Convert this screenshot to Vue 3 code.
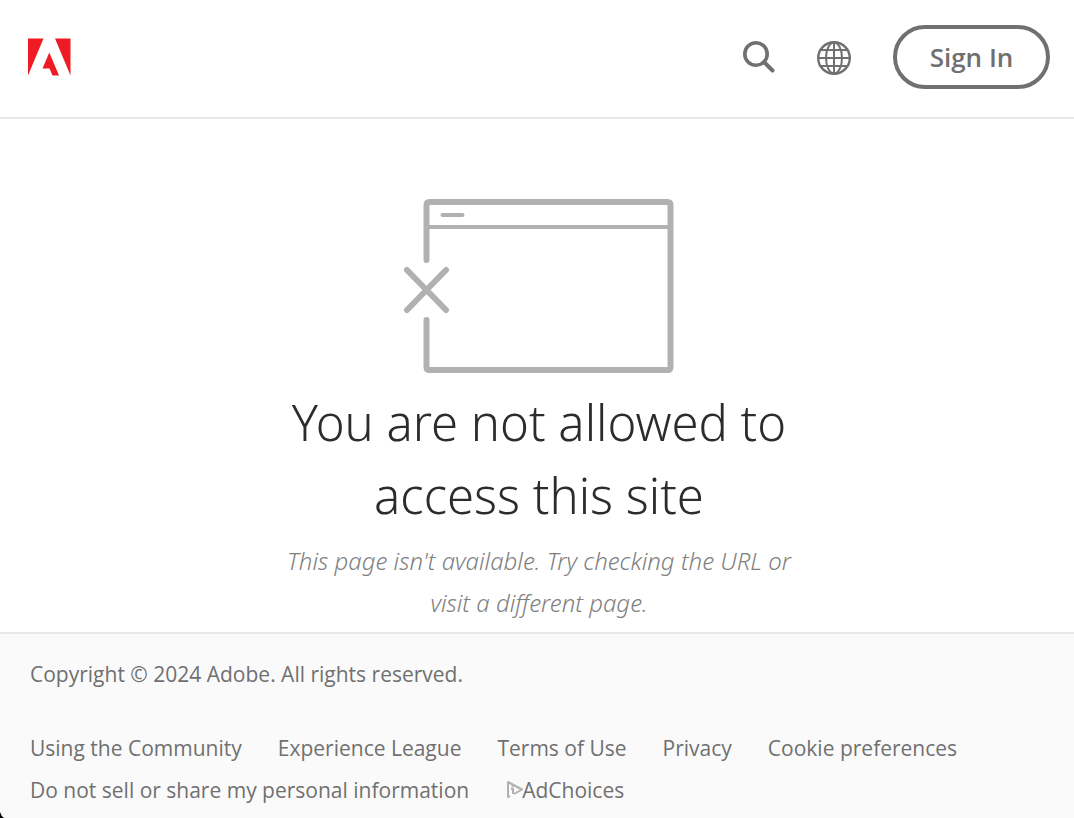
<script setup>
import { ref } from "vue"

const copyright = "Copyright © 2024 Adobe. All rights reserved."

const links = ref([
  { text: "Using the Community" },
  { text: "Experience League" },
  { text: "Terms of Use" },
  { text: "Privacy" },
  { text: "Cookie preferences" },
  { text: "Do not sell or share my personal information" },
  { text: "AdChoices", adIcon: true },
])
</script>

<template>
  <div class="page">
    <header class="header">
      <a href="#" class="logo" aria-label="Adobe">
        <svg width="43" height="38" viewBox="0 0 43 38">
          <path fill="#ed1c24" d="M0 .5H15.500L0 37.500ZM27 .5H42.500V37.500ZM21.300 14.500L31 37.500H24.500L21.500 30.500H14.500Z" />
        </svg>
      </a>
      <div class="actions">
        <button type="button" class="icon-btn" aria-label="Search">
          <svg width="34" height="36" viewBox="0 0 34 36" fill="none" stroke="#707070">
            <circle cx="15" cy="15" r="11.200" stroke-width="3.600" />
            <path d="M23 23L31.500 31.500" stroke-width="4" stroke-linecap="round" />
          </svg>
        </button>
        <button type="button" class="icon-btn" aria-label="Language">
          <svg width="34" height="36" viewBox="0 0 34 36" fill="none" stroke="#707070" stroke-width="2">
            <circle cx="17" cy="19" r="15.800" stroke-width="2.400" />
            <ellipse cx="17" cy="19" rx="8" ry="15.500" />
            <path d="M17 3V35M1 19H33M3 11H31M3 27H31" />
          </svg>
        </button>
        <button type="button" class="sign-in">Sign In</button>
      </div>
    </header>

    <main class="main">
      <svg class="picture" width="272" height="176" viewBox="0 0 272 176" fill="none" stroke="#b1b1b1" stroke-linecap="round">
        <path d="M23.500 62V7Q23.500 4 26.500 4H264.500Q267.500 4 267.500 7V169Q267.500 172 264.500 172H26.500Q23.500 172 23.500 169V122" stroke-width="6" />
        <path d="M24 29H268" stroke-width="4" />
        <path d="M39.500 17H59.500" stroke-width="4" />
        <path d="M4 72L43 112M43 72L4 112" stroke-width="6" />
      </svg>
      <h1>You are not allowed to access this site</h1>
      <p>This page isn't available. Try checking the URL or visit a different page.</p>
    </main>

    <footer class="footer">
      <div class="copyright">{{ copyright }}</div>
      <nav class="links">
        <a v-for="item in links" :key="item.text" href="#">
          <svg v-if="item.adIcon" class="ad-icon" width="18" height="18" viewBox="0 0 18 18" fill="none" stroke="#b1b1b1" stroke-width="2">
            <path d="M5 16L3 17V2L17 9.500L9 14" stroke-linejoin="round" />
            <path d="M7.500 5.500V7.500M6 9H8V14" />
          </svg>{{ item.text }}
        </a>
      </nav>
    </footer>

    <!-- rounded corner of the window -->
    <svg class="corner" width="4" height="6" viewBox="0 0 4 6">
      <path d="M0 0Q1 4 4 6H0Z" fill="#000" />
    </svg>
  </div>
</template>

<style>
body {
  margin: 0;
  background: #fff;
}
</style>

<style scoped>
.page {
  position: relative;
  display: flex;
  flex-direction: column;
  min-height: 100vh;
  font-family: "Open Sans", "Noto Sans", sans-serif;
  color: #707070;
}
.header {
  display: flex;
  align-items: center;
  justify-content: space-between;
  padding: 25px 24px 28px 28px;
  border-bottom: 2px solid #e8e8e8;
}
.logo {
  display: flex;
}
.actions {
  display: flex;
  align-items: center;
  gap: 42px;
}
.icon-btn {
  display: flex;
  padding: 0;
  border: 0;
  background: none;
}
.sign-in {
  min-width: 157px;
  height: 64px;
  padding: 0 32px;
  border: 4px solid #707070;
  border-radius: 32px;
  background: #fff;
  color: #707070;
  font-family: inherit;
  font-size: 26px;
  font-weight: 600;
}
.main {
  display: flex;
  flex-direction: column;
  align-items: center;
  padding: 79px 0 8px 4px;
  font-family: "Noto Sans", "Open Sans", sans-serif;
  text-align: center;
}
h1 {
  max-width: 540px;
  margin: 12px 0 8px;
  color: #2c2c2c;
  font-size: 49px;
  font-weight: 300;
  line-height: 73px;
}
p {
  max-width: 540px;
  margin: 0;
  color: #808080;
  font-size: 24px;
  font-style: italic;
  font-weight: 300;
  line-height: 42px;
}
.footer {
  flex: 1;
  padding: 19px 30px 6px;
  border-top: 2px solid #e8e8e8;
  background: #fafafa;
  font-size: 21px;
  line-height: 42px;
}
.links {
  display: flex;
  flex-wrap: wrap;
  column-gap: 36px;
  margin-top: 32px;
}
.links a {
  color: #707070;
  text-decoration: none;
}
.ad-icon {
  margin-right: -1px;
}
.corner {
  position: absolute;
  left: 0;
  bottom: 0;
}
</style>
